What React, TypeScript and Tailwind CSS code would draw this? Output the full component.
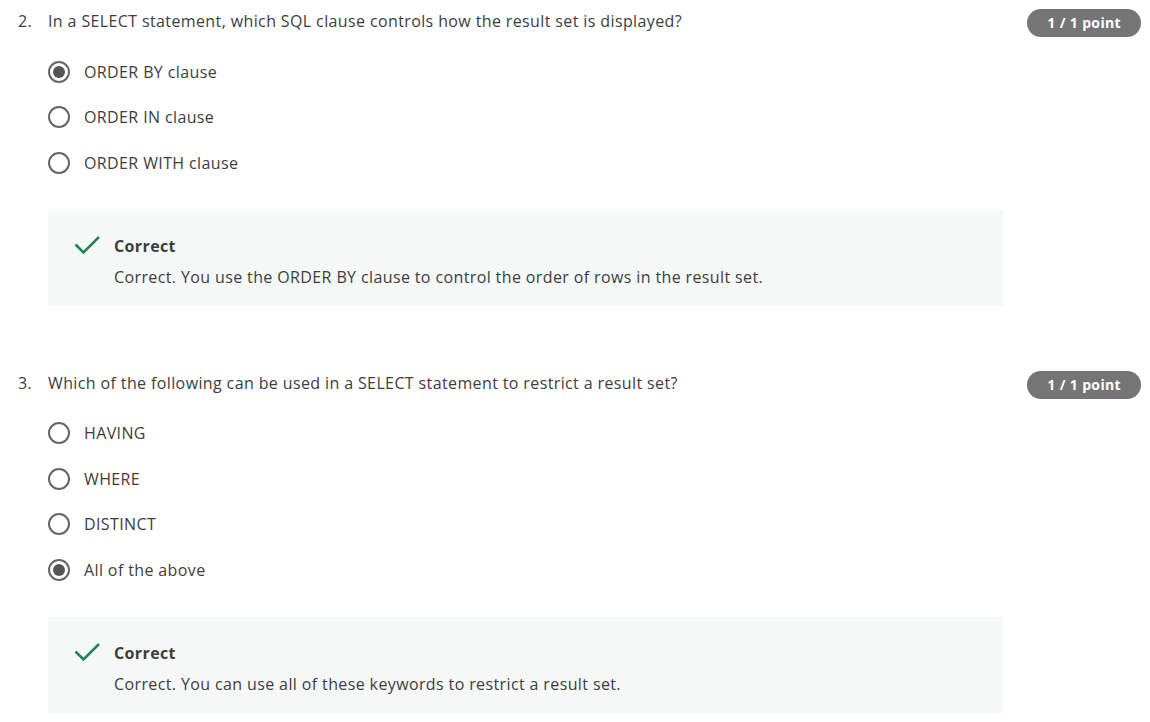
import React from "react";

type Question = {
  num: string;
  text: string;
  options: string[];
  selected: number;
  feedback: string;
};

const questions: Question[] = [
  {
    num: "2.",
    text: "In a SELECT statement, which SQL clause controls how the result set is displayed?",
    options: ["ORDER BY clause", "ORDER IN clause", "ORDER WITH clause"],
    selected: 0,
    feedback: "Correct. You use the ORDER BY clause to control the order of rows in the result set.",
  },
  {
    num: "3.",
    text: "Which of the following can be used in a SELECT statement to restrict a result set?",
    options: ["HAVING", "WHERE", "DISTINCT", "All of the above"],
    selected: 3,
    feedback: "Correct. You can use all of these keywords to restrict a result set.",
  },
];

function Radio({ checked }: { checked: boolean }) {
  return (
    <span className="flex h-[22px] w-[22px] shrink-0 items-center justify-center rounded-full border-2 border-[#666666]">
      {checked && <span className="block h-[12px] w-[12px] rounded-full bg-[#555555]" />}
    </span>
  );
}

function CheckIcon() {
  return (
    <svg width="26" height="20" viewBox="0 0 26 20" fill="none" className="mt-[1px] shrink-0">
      <path d="M1.5 9.5 L9.5 17.5 L25 2" stroke="#1f8354" strokeWidth="2.5" />
    </svg>
  );
}

function QuestionBlock({ q }: { q: Question }) {
  return (
    <section>
      <div className="flex items-start justify-between pr-[9px]">
        <div className="flex pl-[18px] leading-6">
          <span className="w-[30px]">{q.num}</span>
          <span>{q.text}</span>
        </div>
        <span className="h-[28px] rounded-full bg-[#757575] px-[20px] text-sm font-bold leading-[28px] tracking-[0.35px] text-white">
          1 / 1 point
        </span>
      </div>

      <div className="mt-3 pl-[48px]">
        {q.options.map((opt, i) => (
          <div key={opt} className="flex h-[45.5px] items-center gap-[14px]">
            <Radio checked={i === q.selected} />
            <span className="leading-6">{opt}</span>
          </div>
        ))}
      </div>

      <div className="ml-[48px] mt-6 flex w-[955px] gap-[14px] bg-[#f5f8f7] pb-[17px] pl-[26px] pt-6">
        <CheckIcon />
        <div>
          <div className="font-bold leading-6">Correct</div>
          <div className="mt-[7px] leading-6">{q.feedback}</div>
        </div>
      </div>
    </section>
  );
}

export default function App() {
  return (
    <div className="min-h-[722px] w-[1150px] bg-white pt-[9px] text-base tracking-[0.38px] text-[#3d3d3d] [font-family:'Open_Sans',sans-serif]">
      <div className="flex flex-col gap-[65px]">
        {questions.map((q) => (
          <QuestionBlock key={q.num} q={q} />
        ))}
      </div>
    </div>
  );
}
